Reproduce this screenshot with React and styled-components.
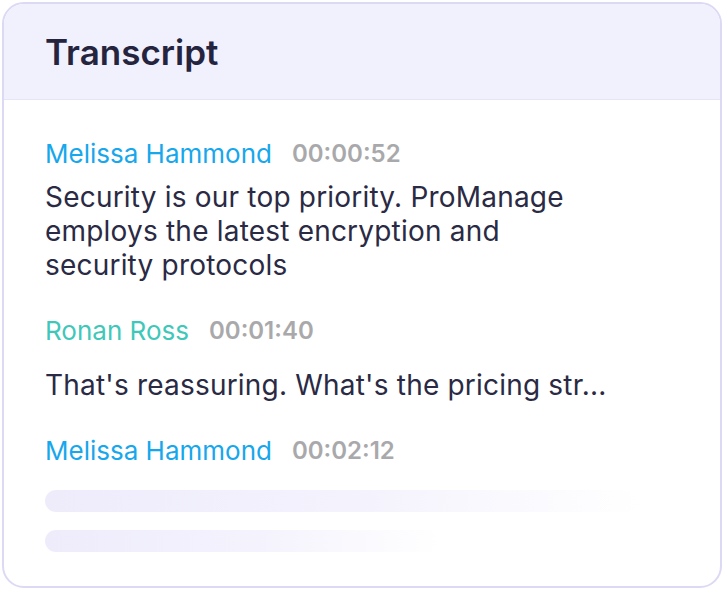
import React from "react";
import styled, { createGlobalStyle } from "styled-components";

const GlobalStyle = createGlobalStyle`
  html, body {
    margin: 0;
    padding: 0;
    background: #ffffff;
  }
  body {
    font-family: "Inter", "Noto Sans", sans-serif;
  }
`;

const messages = [
  {
    name: "Melissa Hammond",
    color: "#17a7ec",
    time: "00:00:52",
    text: "Security is our top priority. ProManage employs the latest encryption and security protocols",
    offset: 10,
    single: false,
  },
  {
    name: "Ronan Ross",
    color: "#3fc8b9",
    time: "00:01:40",
    text: "That's reassuring. What's the pricing str...",
    offset: 21,
    single: true,
  },
];

const App = () => {
  return (
    <>
      <GlobalStyle />
      <Page>
        <Card>
          <Header>
            <Title>Transcript</Title>
          </Header>
          <Body>
            {messages.map((m, index) => (
              <Entry key={index}>
                <Meta>
                  <Speaker color={m.color}>{m.name}</Speaker>
                  <Time>{m.time}</Time>
                </Meta>
                <Text $offset={m.offset} $single={m.single}>
                  {m.text}
                </Text>
              </Entry>
            ))}
            <Entry>
              <Meta>
                <Speaker color="#17a7ec">Melissa Hammond</Speaker>
                <Time>00:02:12</Time>
              </Meta>
              <Skeleton>
                <Bar $width="596px" />
                <Bar $width="396px" />
              </Skeleton>
            </Entry>
          </Body>
        </Card>
      </Page>
    </>
  );
};

export default App;

const Page = styled.div`
  width: 724px;
  height: 590px;
  padding: 2px;
  box-sizing: border-box;
`;

const Card = styled.div`
  height: 100%;
  box-sizing: border-box;
  border: 2px solid #dcd9f4;
  border-radius: 22px;
  overflow: hidden;
  background: #ffffff;
  display: flex;
  flex-direction: column;
`;

const Header = styled.div`
  height: 96px;
  flex-shrink: 0;
  box-sizing: border-box;
  background: #f1f0fd;
  border-bottom: 1px solid #e6e4f7;
  display: flex;
  align-items: center;
  padding: 0 41px;
`;

const Title = styled.h1`
  margin: 0;
  font-size: 35px;
  font-weight: 600;
  color: #25243f;
`;

const Body = styled.div`
  padding: 36px 41px 0 41px;
  display: flex;
  flex-direction: column;
  gap: 31px;
`;

const Entry = styled.div`
  display: flex;
  flex-direction: column;
`;

const Meta = styled.div`
  display: flex;
  align-items: center;
  gap: 20px;
  height: 34px;
`;

const Speaker = styled.span`
  font-size: 26px;
  font-weight: 400;
  color: ${(p) => p.color};
`;

const Time = styled.span`
  font-size: 24px;
  font-weight: 600;
  color: #a9a9ab;
`;

const Text = styled.p`
  margin: ${(p) => p.$offset}px 0 0 0;
  max-width: 540px;
  font-size: 28px;
  line-height: 34px;
  letter-spacing: 0.2px;
  color: #2a2a44;
  white-space: ${(p) => (p.$single ? "nowrap" : "normal")};
`;

const Skeleton = styled.div`
  display: flex;
  flex-direction: column;
  gap: 18px;
  padding-top: 23px;
`;

const Bar = styled.div`
  height: 22px;
  width: ${(p) => p.$width};
  border-radius: 11px;
  background: linear-gradient(90deg, #eeecfb 0%, #f3f2fd 50%, rgba(255, 255, 255, 0) 100%);
`;
